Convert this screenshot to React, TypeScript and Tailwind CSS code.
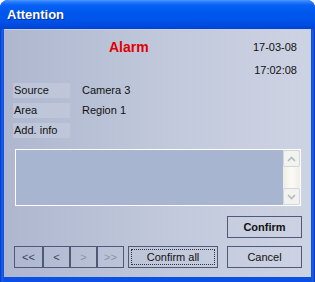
export default function App() {
  const font = { fontFamily: '"Liberation Sans", Arial, sans-serif' };
  return (
    <div className="w-[315px] h-[282px] bg-white" style={font}>
      <div className="flex h-full flex-col rounded-t-[8px] bg-[linear-gradient(to_right,#0733b8_0px,#1762f0_2px,#0b4fe4_4px,#0b4fe4_311px,#1a5ee8_313px,#0733b8_315px)]">
        {/* title bar */}
        <div className="flex h-[29px] items-center rounded-t-[8px] bg-[linear-gradient(to_bottom,#4a9bff_0px,#2a7bff_2px,#0862f5_5px,#0058ee_12px,#0054ea_20px,#0048dc_27px,#0040d0_29px)] pl-[7px]">
          <span className="text-[13px] font-bold leading-[16px] text-white [text-shadow:1px_1px_0_#0a2f9a]">
            Attention
          </span>
        </div>

        {/* body */}
        <div className="mx-[4px] mb-[5px] flex flex-1 flex-col border-t border-[#c8d0e4] bg-[linear-gradient(to_right,#aeb7cf,#c2c9dc_55%,#cdd3e3)] text-[11px] text-[#111]">
          {/* header */}
          <div className="flex h-[50px] items-start">
            <div className="ml-[105px] pt-[9px] text-[14px] font-bold leading-[16px] text-[#e00000]">
              Alarm
            </div>
            <div className="ml-auto mr-[14px] flex flex-col items-end gap-[10px] pt-[11px] leading-[13px]">
              <span>17-03-08</span>
              <span>17:02:08</span>
            </div>
          </div>

          {/* info rows */}
          <div className="flex flex-col pl-[9px]">
            {[
              ["Source", "Camera 3"],
              ["Area", "Region 1"],
              ["Add. info", ""],
            ].map(([k, v]) => (
              <div key={k} className="flex h-[20px] items-center">
                <div className="h-[15px] w-[57px] bg-[#c3cadd]/70 pl-[1px] leading-[15px]">{k}</div>
                <div className="ml-[12px] leading-[15px]">{v}</div>
              </div>
            ))}
          </div>

          {/* text area */}
          <div className="ml-[11px] mt-[9px] flex h-[57px] w-[286px] border border-white bg-[#a7b5d1]">
            <div className="flex-1" />
            <div className="flex w-[17px] flex-col justify-between bg-[linear-gradient(to_right,#eeede5,#fbfaf4,#f0efe6)]">
              <div className="flex h-[17px] items-center justify-center rounded-[2px] border border-[#d2d6e0] bg-[#f2f2ee]">
                <svg width="9" height="6" viewBox="0 0 9 6">
                  <polyline points="1,5 4.5,1.5 8,5" fill="none" stroke="#b4b8c4" strokeWidth="1.6" />
                </svg>
              </div>
              <div className="flex h-[17px] items-center justify-center rounded-[2px] border border-[#d2d6e0] bg-[#f2f2ee]">
                <svg width="9" height="6" viewBox="0 0 9 6">
                  <polyline points="1,1 4.5,4.5 8,1" fill="none" stroke="#b4b8c4" strokeWidth="1.6" />
                </svg>
              </div>
            </div>
          </div>

          {/* confirm */}
          <div className="mr-[9px] mt-[10px] flex justify-end">
            <button className="h-[22px] w-[75px] border border-[#4d5a7a] text-[11px] font-bold">
              Confirm
            </button>
          </div>

          {/* bottom row */}
          <div className="mt-[8px] flex items-center pl-[10px] pr-[9px]">
            <div className="flex h-[22px] border border-[#4d5a7a]">
              {[
                ["<<", "text-[#3a4458]"],
                ["<", "text-[#3a4458]"],
                [">", "text-[#8a93aa]"],
                [">>", "text-[#8a93aa]"],
              ].map(([t, c], i) => (
                <div
                  key={t}
                  className={`flex w-[27px] items-center justify-center ${c} ${i > 0 ? "border-l-2 border-[#4d5a7a]" : ""}`}
                >
                  {t}
                </div>
              ))}
            </div>
            <button className="ml-[4px] h-[22px] w-[90px] border border-[#4d5a7a] p-[2px] text-[11px]">
              <div className="flex h-full items-center justify-center border border-dotted border-[#333]">
                Confirm all
              </div>
            </button>
            <button className="ml-auto h-[22px] w-[75px] border border-[#4d5a7a] text-[11px]">Cancel</button>
          </div>
        </div>
      </div>
    </div>
  );
}
